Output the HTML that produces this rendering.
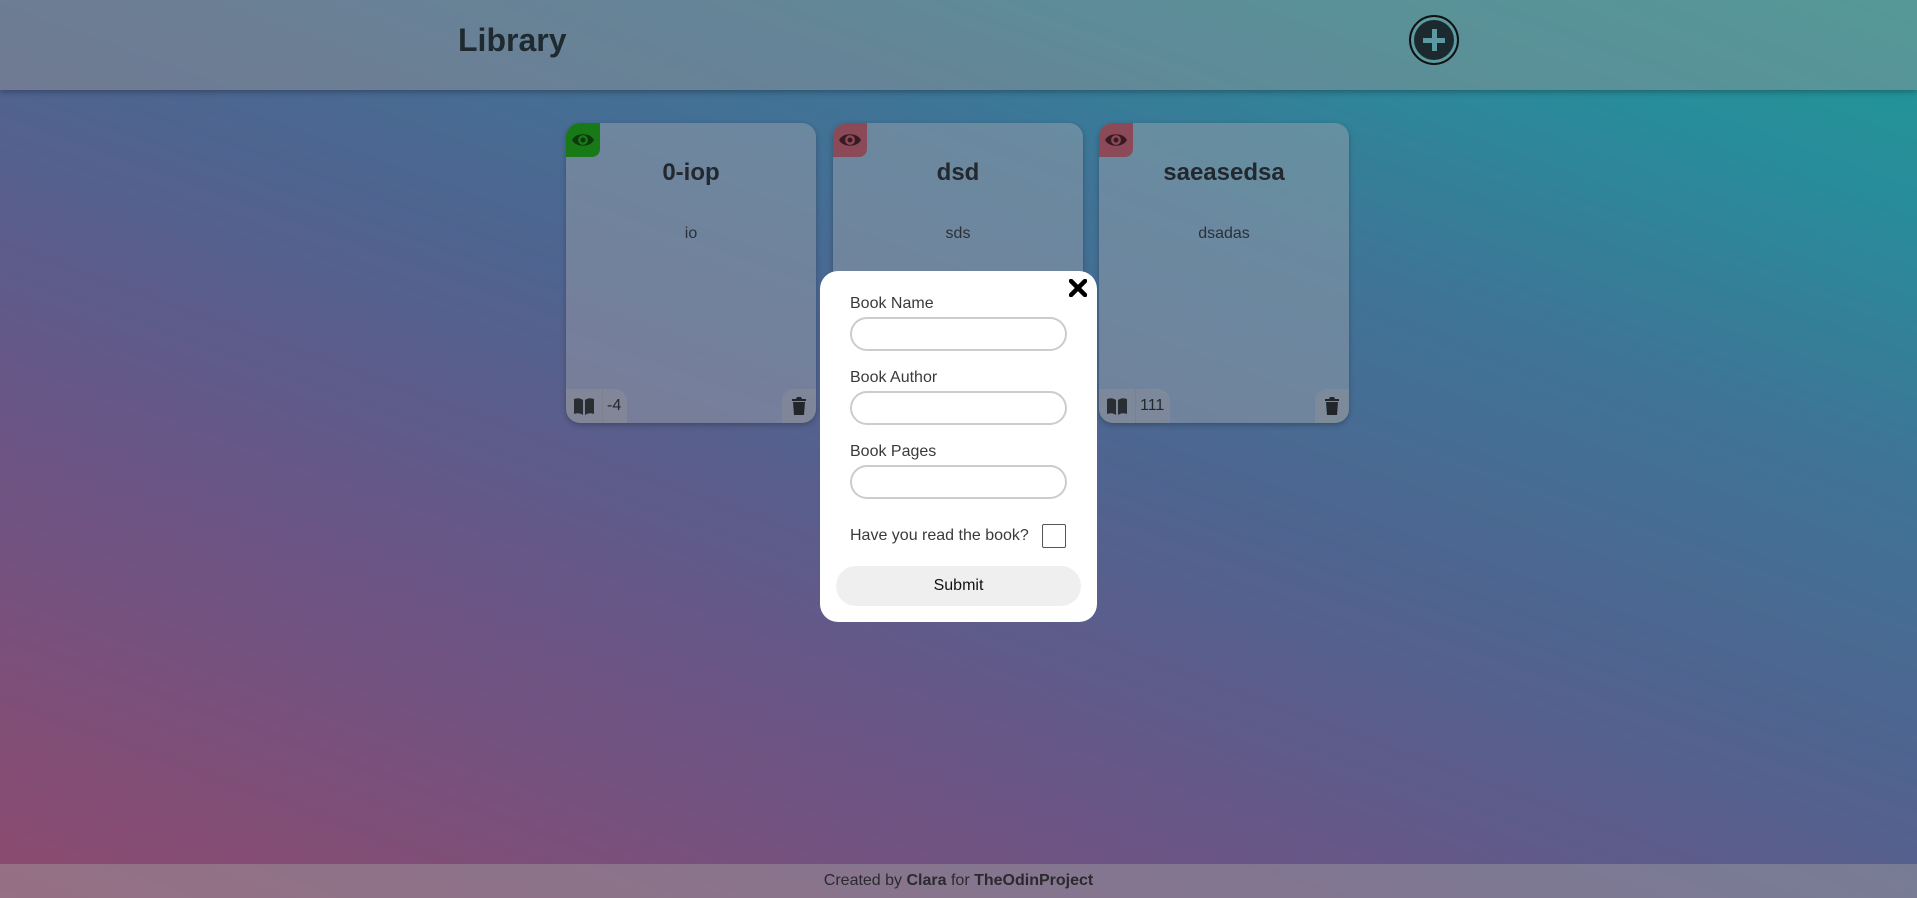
<!DOCTYPE html>
<html><head><meta charset="utf-8"><style>
*{box-sizing:border-box;margin:0;padding:0}
body{width:1917px;height:898px;overflow:hidden;font-family:"Liberation Sans",sans-serif;position:relative;
background:linear-gradient(20deg,#8e4a6e 0%,#6a5586 30%,#4f6490 52%,#3f7497 70%,#2a8a9a 85%,#1f9a98 100%);}
header{position:absolute;left:0;top:0;width:1917px;height:90px;background:rgba(150,150,150,.45);box-shadow:0 2px 6px rgba(0,0,0,.3)}
header h1{position:absolute;left:458px;top:22px;font-size:32px;color:#1f2a30;font-weight:bold}
.plus{position:absolute;left:1409px;top:15px;width:50px;height:50px;border-radius:50%;background:#1c2a30;border:2px solid #111;box-shadow:inset 0 0 0 3px #5a9aa0}
.plus:before,.plus:after{content:"";position:absolute;background:#5a9aa0}
.plus:before{left:12px;top:21px;width:22px;height:5px}
.plus:after{left:21px;top:12px;width:5px;height:22px}
.card{position:absolute;top:123px;width:250px;height:300px;border-radius:14px;background:rgba(160,165,170,.45);box-shadow:0 2px 6px rgba(0,0,0,.25);overflow:hidden;color:#22282e;text-align:center}
.eye{position:absolute;left:0;top:0;width:34px;height:34px;border-radius:0 0 8px 0;display:flex;align-items:center;justify-content:center}
.card h2{margin-top:36px;font-size:24px}
.card p{margin-top:38px;font-size:16px;color:#2a3038}
.bar{position:absolute;bottom:0;left:0;height:34px;display:flex;border-radius:0 12px 0 0;background:rgba(150,150,150,.35)}
.bar div{width:36px;display:flex;align-items:center;justify-content:center;font-size:16px}
.bar .n{width:auto;padding:0 6px 0 4px;border-left:1px solid rgba(120,120,120,.4);border-radius:0 12px 0 0}
.del{position:absolute;right:0;bottom:0;width:34px;height:34px;border-radius:12px 0 0 0;background:rgba(150,150,150,.35);display:flex;align-items:center;justify-content:center}
.modal{position:absolute;left:820px;top:271px;width:277px;height:351px;background:#fff;border-radius:18px;color:#3a3a3a}
.modal label{position:absolute;left:30px;font-size:16px}
.modal .in{position:absolute;left:30px;width:217px;height:34px;border:2px solid #ccc;border-radius:17px}
.cb{position:absolute;left:222px;top:253px;width:24px;height:24px;border:1px solid #555;border-radius:2px}
.sub{position:absolute;left:16px;top:295px;width:245px;height:40px;background:#efefef;border-radius:20px;text-align:center;line-height:40px;font-size:16px;color:#111}
.x{position:absolute;right:10px;top:8px}
footer{position:absolute;left:0;top:864px;width:1917px;height:34px;background:rgba(160,160,160,.45);text-align:center;line-height:34px;font-size:16px;color:#2a2a2e}
</style></head><body>
<header><h1>Library</h1><div class="plus"></div></header>

<div class="card" style="left:566px">
<div class="eye" style="background:#177a17"><svg width="24" height="18" viewBox="0 0 22 16"><path d="M1 8C4 1 18 1 21 8C18 15 4 15 1 8Z" fill="#0d3a0d"/><circle cx="11" cy="8" r="4.5" fill="#177a17"/><circle cx="11" cy="8" r="2.3" fill="#0d3a0d"/></svg></div>
<h2>0-iop</h2><p>io</p>
<div class="bar"><div><svg width="24" height="20" viewBox="0 0 22 20"><path d="M1 3Q6 1 10 4V19Q6 16 1 18Z M12 4Q16 1 21 3V18Q16 16 12 19Z" fill="#2a2e33"/></svg></div><div class="n">-4</div></div>
<div class="del"><svg width="14" height="18" viewBox="0 0 14 18"><path d="M0 2H4L5 0H9L10 2H14V4H0Z M1 5H13L12 18H2Z" fill="#22262b"/></svg></div>
</div>

<div class="card" style="left:833px">
<div class="eye" style="background:#8c4a58"><svg width="24" height="18" viewBox="0 0 22 16"><path d="M1 8C4 1 18 1 21 8C18 15 4 15 1 8Z" fill="#3a1a22"/><circle cx="11" cy="8" r="4.5" fill="#8c4a58"/><circle cx="11" cy="8" r="2.3" fill="#3a1a22"/></svg></div>
<h2>dsd</h2><p>sds</p>
</div>

<div class="card" style="left:1099px">
<div class="eye" style="background:#8c4a58"><svg width="24" height="18" viewBox="0 0 22 16"><path d="M1 8C4 1 18 1 21 8C18 15 4 15 1 8Z" fill="#3a1a22"/><circle cx="11" cy="8" r="4.5" fill="#8c4a58"/><circle cx="11" cy="8" r="2.3" fill="#3a1a22"/></svg></div>
<h2>saeasedsa</h2><p>dsadas</p>
<div class="bar"><div><svg width="24" height="20" viewBox="0 0 22 20"><path d="M1 3Q6 1 10 4V19Q6 16 1 18Z M12 4Q16 1 21 3V18Q16 16 12 19Z" fill="#2a2e33"/></svg></div><div class="n">111</div></div>
<div class="del"><svg width="14" height="18" viewBox="0 0 14 18"><path d="M0 2H4L5 0H9L10 2H14V4H0Z M1 5H13L12 18H2Z" fill="#22262b"/></svg></div>
</div>

<div class="modal">
<div class="x"><svg width="18" height="18" viewBox="0 0 18 18"><path d="M2 2L16 16M16 2L2 16" stroke="#000" stroke-width="4.5" stroke-linecap="round"/></svg></div>
<label style="top:24px">Book Name</label><div class="in" style="top:46px"></div>
<label style="top:98px">Book Author</label><div class="in" style="top:120px"></div>
<label style="top:172px">Book Pages</label><div class="in" style="top:194px"></div>
<label style="top:256px">Have you read the book?</label><div class="cb"></div>
<div class="sub">Submit</div>
</div>

<footer>Created by <b>Clara</b> for <b>TheOdinProject</b></footer>
</body></html>
